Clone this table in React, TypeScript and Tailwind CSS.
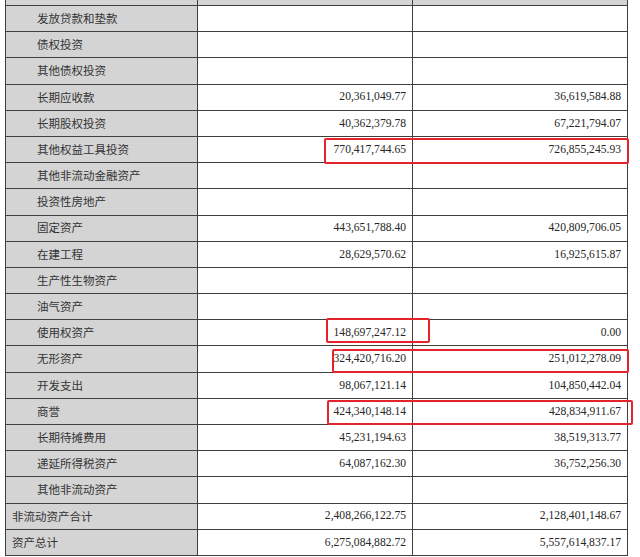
type Row = {
  label: string;
  a?: string;
  b?: string;
  indent?: boolean;
};

const rows: Row[] = [
  { label: '发放贷款和垫款', indent: true },
  { label: '债权投资', indent: true },
  { label: '其他债权投资', indent: true },
  { label: '长期应收款', a: '20,361,049.77', b: '36,619,584.88', indent: true },
  { label: '长期股权投资', a: '40,362,379.78', b: '67,221,794.07', indent: true },
  { label: '其他权益工具投资', a: '770,417,744.65', b: '726,855,245.93', indent: true },
  { label: '其他非流动金融资产', indent: true },
  { label: '投资性房地产', indent: true },
  { label: '固定资产', a: '443,651,788.40', b: '420,809,706.05', indent: true },
  { label: '在建工程', a: '28,629,570.62', b: '16,925,615.87', indent: true },
  { label: '生产性生物资产', indent: true },
  { label: '油气资产', indent: true },
  { label: '使用权资产', a: '148,697,247.12', b: '0.00', indent: true },
  { label: '无形资产', a: '324,420,716.20', b: '251,012,278.09', indent: true },
  { label: '开发支出', a: '98,067,121.14', b: '104,850,442.04', indent: true },
  { label: '商誉', a: '424,340,148.14', b: '428,834,911.67', indent: true },
  { label: '长期待摊费用', a: '45,231,194.63', b: '38,519,313.77', indent: true },
  { label: '递延所得税资产', a: '64,087,162.30', b: '36,752,256.30', indent: true },
  { label: '其他非流动资产', indent: true },
  { label: '非流动资产合计', a: '2,408,266,122.75', b: '2,128,401,148.67' },
  { label: '资产总计', a: '6,275,084,882.72', b: '5,557,614,837.17' },
];

const labelFont = { fontFamily: '"Noto Sans CJK SC", "Liberation Serif", serif' };

function Highlight({ className }: { className: string }) {
  return (
    <div
      className={`pointer-events-none absolute rounded-[2px] border-2 border-[#e4232a] ${className}`}
    />
  );
}

export default function App() {
  return (
    <div className="relative h-[557px] w-[640px] overflow-hidden bg-white text-[#262626]">
      <div className="ml-[5px] w-[623px] border-l border-[#3f3f3f]">
        {/* clipped header row */}
        <div className="flex h-[6px] border-b border-[#3f3f3f] bg-[#d4d4d4]">
          <div className="w-[192px] shrink-0 border-r border-[#3f3f3f]" />
          <div className="w-[215px] shrink-0 border-r border-[#3f3f3f]" />
          <div className="w-[215px] shrink-0 border-r border-[#3f3f3f]" />
        </div>

        {rows.map((row) => (
          <div key={row.label} className="flex h-[26.2px] border-b border-[#3f3f3f]">
            <div
              className={`flex w-[192px] shrink-0 items-center border-r border-[#3f3f3f] bg-[#d4d4d4] text-[11.5px] text-[#333] ${
                row.indent ? 'pl-[31px]' : 'pl-[6px]'
              }`}
              style={labelFont}
            >
              {row.label}
            </div>
            <div className="flex w-[215px] shrink-0 items-center justify-end border-r border-[#3f3f3f] pr-[6px] font-['Liberation_Serif',serif] text-[11.6px]">
              {row.a}
            </div>
            <div className="flex w-[215px] shrink-0 items-center justify-end border-r border-[#3f3f3f] pr-[6px] font-['Liberation_Serif',serif] text-[11.6px]">
              {row.b}
            </div>
          </div>
        ))}
      </div>

      <Highlight className="left-[324px] top-[138px] h-[26px] w-[305px]" />
      <Highlight className="left-[326px] top-[318px] h-[25px] w-[104px]" />
      <Highlight className="left-[332px] top-[349px] h-[24px] w-[297px]" />
      <Highlight className="left-[327px] top-[400px] h-[25px] w-[306px]" />
    </div>
  );
}
